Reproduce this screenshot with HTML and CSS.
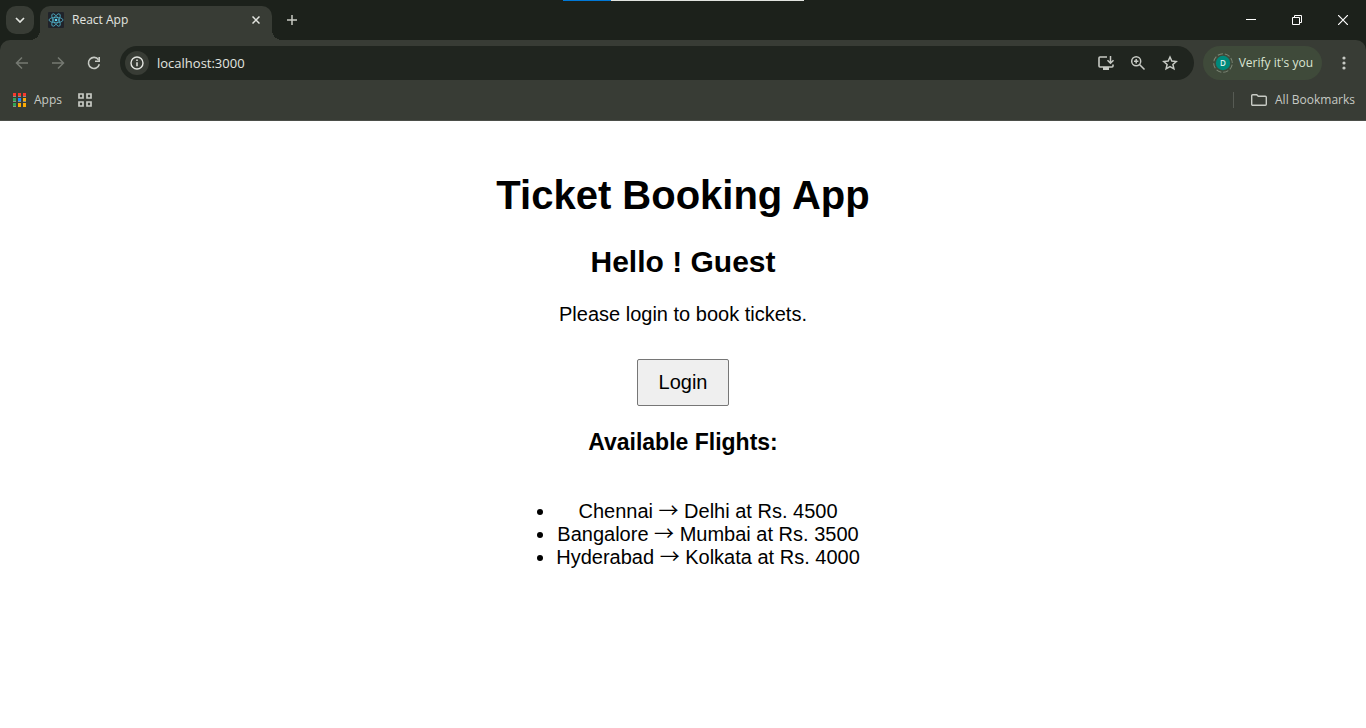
FILE: index.html
```html
<!DOCTYPE html>
<html lang="en">
<head>
<meta charset="utf-8">
<title>React App</title>
<link rel="stylesheet" href="styles.css">
</head>
<body>
<div class="window">
  <header class="browser">
    <div class="capture-bar"></div>
    <div class="tab-strip">
      <button class="tab-search" aria-label="Search tabs"><svg width="10" height="6" viewBox="0 0 10 6"><path d="M1 1l4 4 4-4" fill="none" stroke="currentColor" stroke-width="1.700"/></svg></button>
      <div class="tab">
        <svg class="favicon" width="16" height="16" viewBox="0 0 16 16"><rect width="16" height="16" rx="1" fill="#20232a"/><g fill="none" stroke="#4fb0c8" stroke-width="0.8"><ellipse cx="8" cy="8" rx="7" ry="2.7"/><ellipse cx="8" cy="8" rx="7" ry="2.7" transform="rotate(60 8 8)"/><ellipse cx="8" cy="8" rx="7" ry="2.7" transform="rotate(120 8 8)"/></g><circle cx="8" cy="8" r="1.3" fill="#61dafb"/></svg>
        <span class="tab-title">React App</span>
        <button class="tab-close" aria-label="Close tab"><svg width="8" height="8" viewBox="0 0 8 8"><path d="M.5.5l7 7M7.500.5l-7 7" stroke="currentColor" stroke-width="1.5"/></svg></button>
      </div>
      <button class="new-tab" aria-label="New tab"><svg width="12" height="12" viewBox="0 0 12 12"><path d="M6 1v10M1 6h10" stroke="currentColor" stroke-width="1.500"/></svg></button>
      <div class="window-controls">
        <button aria-label="Minimize"><svg width="10" height="10" viewBox="0 0 10 10"><path d="M0 4.500h10" stroke="currentColor"/></svg></button>
        <button aria-label="Restore"><svg width="10" height="10" viewBox="0 0 10 10"><path d="M.5 2.500h7v7h-7zM2.500 2.500v-2h7v7h-2" fill="none" stroke="currentColor"/></svg></button>
        <button aria-label="Close"><svg width="10" height="10" viewBox="0 0 10 10"><path d="M0 0l10 10M10 0L0 10" stroke="currentColor" stroke-width="1.200"/></svg></button>
      </div>
    </div>
    <div class="toolbar">
      <button class="nav off" aria-label="Back"><svg width="14" height="14" viewBox="0 0 14 14"><path d="M13 7H1.500M7 1.500L1.500 7 7 12.500" fill="none" stroke="currentColor" stroke-width="1.500"/></svg></button>
      <button class="nav off" aria-label="Forward"><svg width="14" height="14" viewBox="0 0 14 14"><path d="M1 7h11.500M7 1.500L12.500 7 7 12.500" fill="none" stroke="currentColor" stroke-width="1.500"/></svg></button>
      <button class="nav" aria-label="Reload"><svg width="14" height="14" viewBox="0 0 14 14"><path d="M11.500 3.800A5.500 5.500 0 1 0 12.300 8.200" fill="none" stroke="currentColor" stroke-width="1.600"/><path d="M12.200 1v4.200H8" fill="none" stroke="currentColor" stroke-width="1.600"/></svg></button>
      <div class="address">
        <button class="site-info" aria-label="Site information"><svg width="14" height="14" viewBox="0 0 14 14"><circle cx="7" cy="7" r="6" fill="none" stroke="currentColor" stroke-width="1.400"/><path d="M7 6.200v4M7 3.600v1.500" stroke="currentColor" stroke-width="1.500"/></svg></button>
        <input class="url" type="text" value="localhost:3000" aria-label="Address">
        <button class="action" aria-label="Install app"><svg width="18" height="16" viewBox="0 0 18 16"><path d="M10 2H3a1 1 0 0 0-1 1v8a1 1 0 0 0 1 1h12a1 1 0 0 0 1-1V9.500" fill="none" stroke="currentColor" stroke-width="1.600"/><path d="M6 12h6v3H6z" fill="currentColor"/><path d="M13.500 1v7M10.500 5.200l3 3 3-3" fill="none" stroke="currentColor" stroke-width="1.500"/></svg></button>
        <button class="action" aria-label="Zoom level"><svg width="16" height="16" viewBox="0 0 16 16"><circle cx="6.200" cy="6.200" r="4.500" fill="none" stroke="currentColor" stroke-width="1.500"/><path d="M9.500 9.500l5 5M6.200 4v4.400M4 6.200h4.400" stroke="currentColor" stroke-width="1.500"/></svg></button>
        <button class="action" aria-label="Bookmark this tab"><svg width="16" height="16" viewBox="0 0 16 16"><path d="M8 2l1.800 4.100 4.400.4-3.300 2.900 1 4.400L8 11.500l-3.900 2.300 1-4.400L1.800 6.500l4.400-.4z" fill="none" stroke="currentColor" stroke-width="1.500"/></svg></button>
      </div>
      <button class="profile"><svg width="20" height="20" viewBox="0 0 20 20"><circle cx="10" cy="10" r="9.300" fill="none" stroke="#7c8675" stroke-width="1" stroke-dasharray="5.300 2" transform="rotate(10 10 10)"/><circle cx="10" cy="10" r="7.200" fill="#00897b"/><text x="10" y="13" text-anchor="middle" class="initial">D</text></svg><span>Verify it's you</span></button>
      <button class="menu" aria-label="Menu"><svg width="4" height="16" viewBox="0 0 4 16" fill="currentColor"><circle cx="2" cy="3" r="1.600"/><circle cx="2" cy="8" r="1.600"/><circle cx="2" cy="13" r="1.600"/></svg></button>
    </div>
    <nav class="bookmarks">
      <a class="bookmark" href="#"><svg width="13" height="14" viewBox="0 0 13 14"><path d="M0 0h3v3H0zM5 0h3v3H5zM10 0h3v3h-3z" fill="#f8382c"/><path d="M0 5h3v3H0zM0 10h3v3H0z" fill="#2fa556"/><path d="M5 5h3v3H5z" fill="#1a8cff"/><path d="M10 5h3v3h-3zM5 10h3v4H5zM10 10h3v4h-3z" fill="#fbab05"/><path d="M0 3h3v1H0zM5 3h3v1H5zM10 3h3v1h-3zM0 8h3v1H0zM5 8h3v1H5zM10 8h3v1h-3zM0 13h3v1H0z" fill="#8c8f89"/></svg>Apps</a>
      <button class="groups" aria-label="Tab groups"><svg width="14" height="14" viewBox="0 0 14 14"><path d="M1 1h4v4H1zM9 1h4v4H9zM1 9h4v4H1zM9 9h4v4H9z" fill="none" stroke="currentColor" stroke-width="1.700"/></svg></button>
      <a class="bookmark all" href="#"><svg width="16" height="12" viewBox="0 0 16 12"><path d="M.7 1.700a1 1 0 0 1 1-1h4l1.600 1.600h7a1 1 0 0 1 1 1v7a1 1 0 0 1-1 1H1.700a1 1 0 0 1-1-1z" fill="none" stroke="currentColor" stroke-width="1.400"/></svg>All Bookmarks</a>
    </nav>
  </header>
  <main class="app">
    <h1>Ticket Booking App</h1>
    <h2>Hello ! Guest</h2>
    <p>Please login to book tickets.</p>
    <button class="login">Login</button>
    <h3>Available Flights:</h3>
    <ul class="flights">
      <li>Chennai <span class="arrow">→</span> Delhi at Rs. 4500</li>
      <li>Bangalore <span class="arrow">→</span> Mumbai at Rs. 3500</li>
      <li>Hyderabad <span class="arrow">→</span> Kolkata at Rs. 4000</li>
    </ul>
  </main>
</div>
</body>
</html>
```
FILE: styles.css
```css
* { box-sizing: border-box; }
body { margin: 0; background: #fff; }
svg { display: block; flex: none; }
.browser { position: relative; background: #1c211b; color: #c7cac4; font: 12px/16px "Open Sans", "Noto Sans", sans-serif; }
.browser button { display: flex; align-items: center; justify-content: center; border: 0; padding: 0; background: none; color: inherit; font: inherit; }
.capture-bar { position: absolute; top: 0; left: 563px; width: 241px; height: 1px; background: linear-gradient(90deg, #0078d7 48px, #e1e3df 48px); }
.tab-strip { display: flex; align-items: center; height: 40px; padding-left: 6px; }
.browser .tab-search { width: 28px; height: 28px; border-radius: 10px; background: #383c35; color: #e3e5e0; }
.tab { position: relative; display: flex; align-items: center; align-self: flex-end; gap: 8px; width: 232px; height: 34px; margin-left: 6px; padding: 0 12px 6px 8px; border-radius: 10px 10px 0 0; background: #383c35; color: #e3e5e0; }
.tab::before, .tab::after { content: ""; position: absolute; bottom: 0; width: 10px; height: 10px; }
.tab::before { right: 100%; background: radial-gradient(circle at 0 0, transparent 10px, #383c35 10px); }
.tab::after { left: 100%; background: radial-gradient(circle at 100% 0, transparent 10px, #383c35 10px); }
.tab-title { flex: 1; }
.browser .new-tab { width: 28px; height: 28px; margin-left: 6px; }
.window-controls { display: flex; margin-left: auto; color: #fff; }
.window-controls button { width: 46px; height: 40px; }
.toolbar { display: flex; align-items: center; height: 46px; padding: 0 12px 0 4px; border-radius: 10px 10px 0 0; background: #383c35; }
.browser .nav { width: 36px; height: 34px; }
.browser .off { color: #757972; }
.address { display: flex; align-items: center; flex: 1; height: 34px; margin-left: 8px; padding: 0 8px 0 5px; border-radius: 17px; background: #20251f; }
.browser .site-info { width: 24px; height: 24px; border-radius: 50%; background: #383c35; color: #e3e5e0; }
.url { flex: 1; min-width: 0; margin-left: 8px; padding: 0; border: 0; outline: 0; background: none; color: #e3e5e0; font: 13px/18px "Open Sans", "Noto Sans", sans-serif; }
.browser .action { width: 32px; height: 32px; }
.browser .profile { gap: 6px; height: 34px; margin-left: 9px; padding: 0 9px 0 10px; border-radius: 17px; background: #3f4a3a; color: #dbe5d3; white-space: nowrap; }
.initial { fill: #d9efec; font-size: 8px; font-weight: 600; }
.browser .menu { width: 20px; height: 32px; margin-left: 12px; }
.bookmarks { display: flex; align-items: center; height: 35px; padding: 0 11px 6px 13px; border-bottom: 1px solid #4b4e49; background: #383c35; }
.bookmark { display: flex; align-items: center; gap: 8px; color: inherit; text-decoration: none; }
.browser .groups { width: 14px; height: 14px; margin-left: 16px; }
.all { margin-left: auto; padding-left: 17px; border-left: 1px solid #575b54; }
.app { padding: 51px 20px; color: #000; font: 20px/23px "Liberation Sans", Arial, sans-serif; text-align: center; }
h1 { margin: 0 0 27px; font-size: 40px; line-height: 46px; }
h2 { margin: 0 0 24px; font-size: 30px; line-height: 34px; }
p { margin: 0 0 33px; }
.login { padding: 11px 21px; border: 1px solid #767676; border-radius: 2px; background: #efefef; color: #000; font: inherit; }
h3 { margin: 23px 0 44px; font-size: 23px; line-height: 27px; }
.flights { display: inline-block; margin: 0; padding: 0 0 0 50px; }
.arrow { font-family: "Noto Sans CJK JP", "Liberation Sans", sans-serif; line-height: 1; }
```
